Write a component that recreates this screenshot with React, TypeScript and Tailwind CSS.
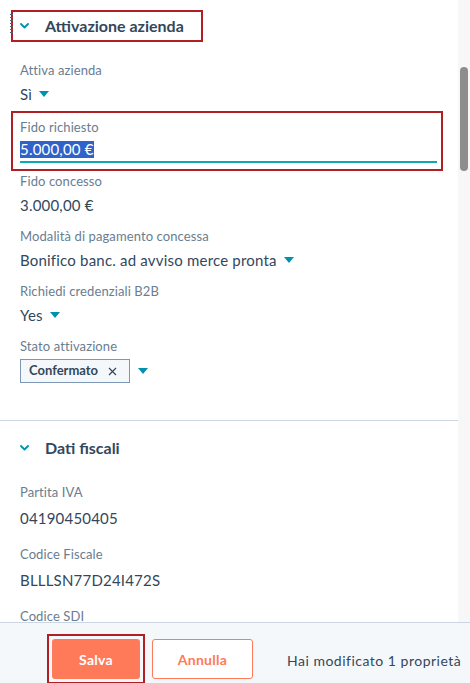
import React from 'react';

const Caret: React.FC = () => (
  <svg width="10" height="6" viewBox="0 0 10 6" className="ml-[7px] shrink-0">
    <path d="M0 0 L10 0 L5 6 Z" fill="#0091ae" />
  </svg>
);

const Chevron: React.FC = () => (
  <svg width="9" height="6" viewBox="0 0 9 6" className="shrink-0">
    <path d="M1 1 L4.5 4.5 L8 1" fill="none" stroke="#0091ae" strokeWidth="1.8" strokeLinecap="round" strokeLinejoin="round" />
  </svg>
);

const Field: React.FC<{ label: string; children: React.ReactNode }> = ({ label, children }) => (
  <div className="mb-[10px]">
    <div className="h-5 flex items-center text-[13px] tracking-[0.1px] text-[#6a7d90]">{label}</div>
    <div className="mt-[1px] h-6 flex items-center text-[15px] tracking-[0.2px] text-[#33475b]">{children}</div>
  </div>
);

const FiscalField: React.FC<{ label: string; value?: string }> = ({ label, value }) => (
  <div className="mb-[15px]">
    <div className="h-5 flex items-center text-[13px] tracking-[0.1px] text-[#6a7d90]">{label}</div>
    {value && <div className="mt-[3px] h-6 flex items-center text-[15px] tracking-[0.2px] text-[#33475b]">{value}</div>}
  </div>
);

const App: React.FC = () => {
  return (
    <div className="w-[470px] h-[683px] flex flex-col bg-white overflow-hidden font-['Lato',sans-serif]">
      <div className="flex flex-1 min-h-0">
        <div className="flex-1 min-w-0 overflow-hidden">
          {/* Attivazione azienda */}
          <div className="pt-[10px] pl-[11px]">
            <div className="relative w-[192px] h-[32px] border-2 border-[#b01f24] flex items-center pl-[7px]">
              <div className="absolute -left-[3px] top-[2px] flex flex-col gap-[2px]">
                {[0, 1, 2, 3, 4, 5, 6].map((i) => (
                  <span key={i} className="block w-[3px] h-[1px] bg-[#55606c]" />
                ))}
              </div>
              <Chevron />
              <span className="ml-[16px] text-[16px] font-bold text-[#33475b]">Attivazione azienda</span>
            </div>
          </div>

          <div className="pl-5 pt-[19px]">
            <Field label="Attiva azienda">
              Sì <Caret />
            </Field>
          </div>

          <div className="ml-[11px] w-[432px] h-[60px] border-2 border-[#b01f24] pl-[7px] pr-[4px] pt-[5px] -mt-[5px]">
            <div className="h-5 flex items-center text-[13px] tracking-[0.1px] text-[#6a7d90]">Fido richiesto</div>
            <div className="h-[25px] flex items-center border-b-2 border-[#0fa7b5]">
              <span className="bg-[#2f63c9] text-white text-[15px] tracking-[0.2px] leading-[17px]">5.000,00 €</span>
            </div>
          </div>

          <div className="pl-5 pt-[1px]">
            <Field label="Fido concesso">3.000,00 €</Field>
            <Field label="Modalità di pagamento concessa">
              Bonifico banc. ad avviso merce pronta <Caret />
            </Field>
            <Field label="Richiedi credenziali B2B">
              Yes <Caret />
            </Field>
            <div>
              <div className="h-5 flex items-center text-[13px] tracking-[0.1px] text-[#6a7d90]">Stato attivazione</div>
              <div className="mt-[2px] flex items-center">
                <div className="h-[24px] w-[110px] flex items-center border border-[#7c98b6] bg-[#f5f8fa] pl-2 text-[13px] font-bold text-[#33475b]">
                  Confermato
                  <svg width="9" height="9" viewBox="0 0 9 9" className="ml-[10px]">
                    <path d="M1 1 L8 8 M8 1 L1 8" stroke="#33475b" strokeWidth="1.2" />
                  </svg>
                </div>
                <span className="ml-[1px]"><Caret /></span>
              </div>
            </div>
          </div>

          <div className="mt-[37px] border-t border-[#cbd6e2]" />

          {/* Dati fiscali */}
          <div className="pt-[11px] pl-[11px]">
            <div className="w-[192px] h-[32px] flex items-center pl-[9px]">
              <Chevron />
              <span className="ml-[16px] text-[16px] font-bold text-[#33475b]">Dati fiscali</span>
            </div>
          </div>

          <div className="pl-5 pt-[19px]">
            <FiscalField label="Partita IVA" value="04190450405" />
            <FiscalField label="Codice Fiscale" value="BLLLSN77D24I472S" />
            <FiscalField label="Codice SDI" />
          </div>
        </div>

        {/* scrollbar */}
        <div className="w-3 bg-[#f7f7f7] flex justify-center shrink-0">
          <div className="mt-[67px] w-2 h-[104px] rounded-full bg-[#8d8d8d]" />
        </div>
      </div>

      {/* footer */}
      <div className="h-[61px] shrink-0 border-t border-[#cbd6e2] bg-[#f5f8fa] flex items-start pl-[47px] pt-[11px]">
        <div className="border-2 border-[#b01f24] p-[3px] pb-0 h-[50px]">
          <button className="w-[88px] h-[40px] rounded-[3px] bg-[#ff7a59] text-white text-[14px] font-bold tracking-[0.3px]">Salva</button>
        </div>
        <button className="ml-[7px] mt-[5px] w-[101px] h-[40px] rounded-[3px] border border-[#ff7a59] bg-white text-[#ff7a59] text-[14px] font-bold tracking-[0.3px]">
          Annulla
        </button>
        <span className="ml-[34px] mt-[16px] text-[14px] tracking-[0.5px] text-[#33475b]">Hai modificato 1 proprietà</span>
      </div>
    </div>
  );
};

export default App;
